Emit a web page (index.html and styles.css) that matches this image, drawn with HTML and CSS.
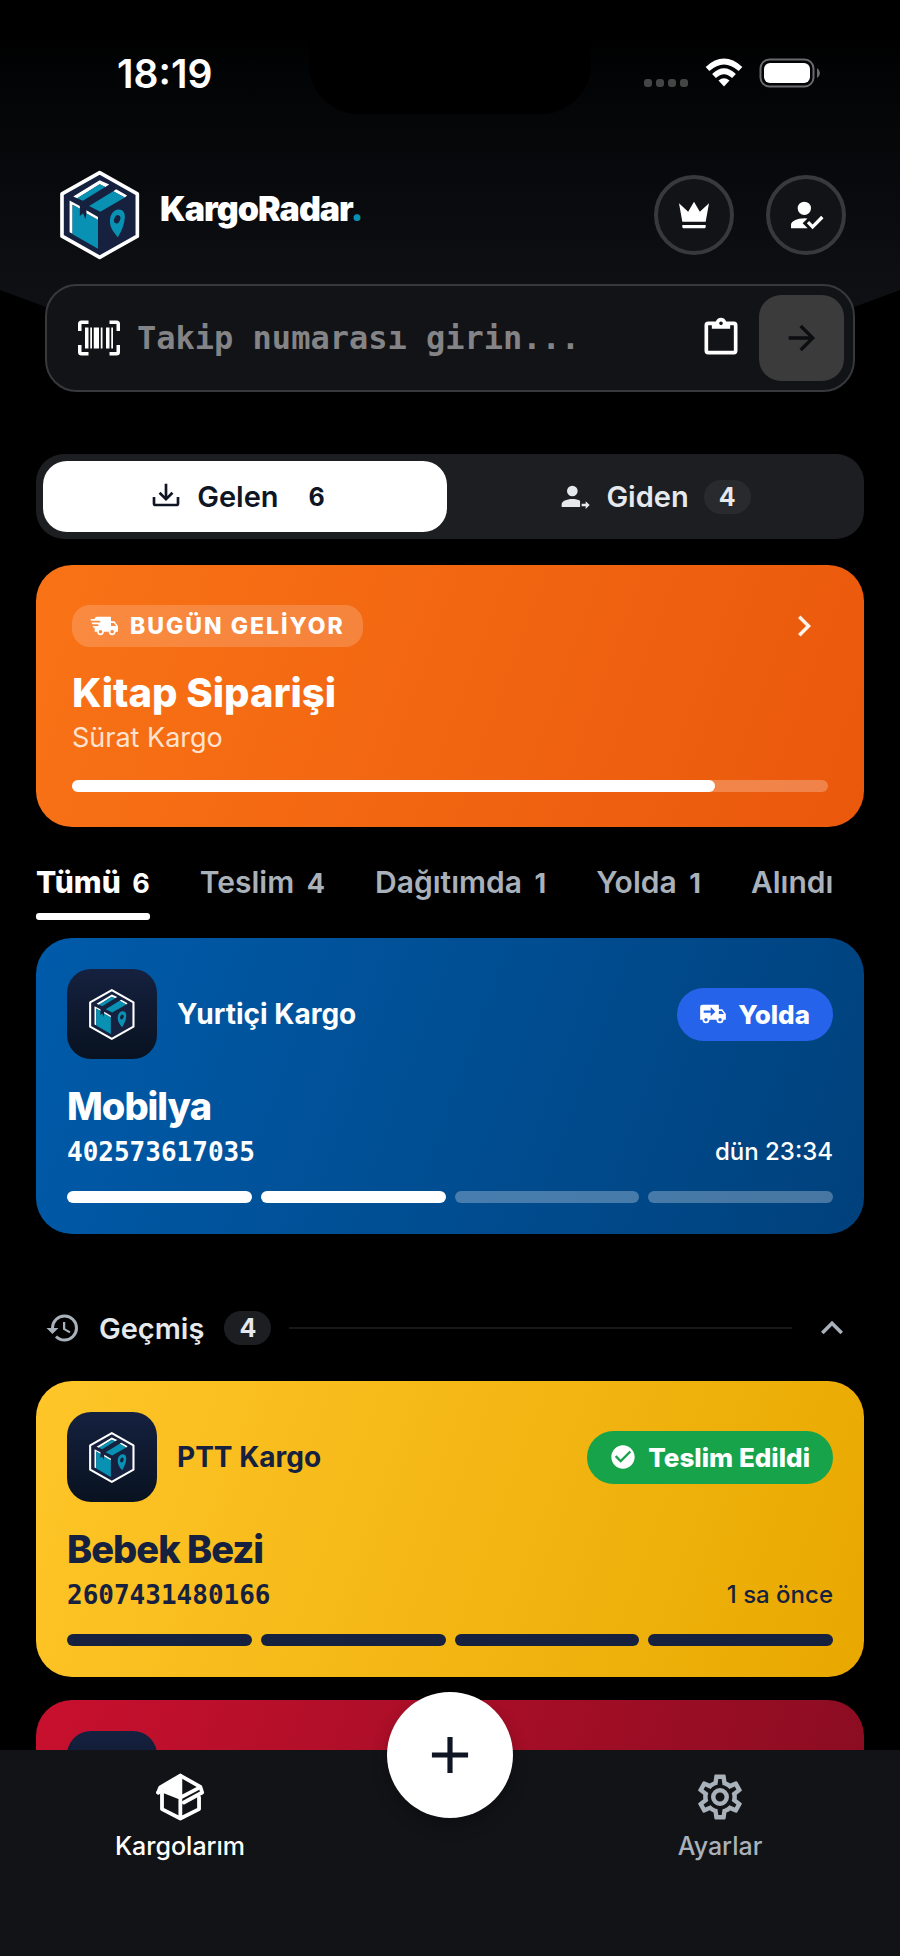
FILE: index.html
```html
<!DOCTYPE html>
<html lang="tr">
<head>
    <meta charset="UTF-8">
    <meta name="viewport" content="width=device-width, initial-scale=1.0">
    <title>KargoRadar</title>
    <link rel="stylesheet" href="styles.css">
</head>
<body>
    <!-- Shared icons -->
    <svg class="sprite" aria-hidden="true">
        <symbol id="logo" viewBox="61 57 242 276">
            <path d="M181 67L295 131V259L181 323L67 259V131Z" fill="#15213f" stroke="#fff" stroke-width="11" stroke-linejoin="round"/>
            <path d="M101 139L181 90L210 103L198 110L181 102L113 144Z" fill="#fff"/>
            <path d="M113 144L181 102L198 110L130 152Z" fill="#0891b2"/>
            <path d="M222 123L231 117L264 136L257 142Z" fill="#fff"/>
            <path d="M149 168L222 123L257 142L183 185Z" fill="#0891b2"/>
            <path d="M90 151L121 168V176L99 164V252L90 247Z" fill="#fff"/>
            <path d="M99 164L121 176V198L131 190L138 208L141 190L176 209V297L99 253Z" fill="#0891b2"/>
            <path d="M141 181L176 201V209L141 190Z" fill="#fff"/>
            <path d="M236 262C218 242 212 229 212 213C212 194 223 178 238 178C252 178 258 188 257 203C256 222 248 242 236 262Z" fill="#0891b2"/>
            <ellipse cx="234" cy="208" rx="9" ry="13" transform="rotate(20 234 208)" fill="#15213f"/>
        </symbol>
        <symbol id="crown" viewBox="0 0 24 24"><path d="M5 16L3 5L8.5 10L12 4L15.5 10L21 5L19 16H5M19 19C19 19.6 18.6 20 18 20H6C5.4 20 5 19.6 5 19V18H19V19Z"/></symbol>
        <symbol id="account-check" viewBox="0 0 24 24"><path d="M21.1 12.5L22.5 13.91L15.97 20.5L12.5 17L13.9 15.59L15.97 17.67L21.1 12.5M10 17L13 20H3V18C3 15.79 6.58 14 11 14L12.89 14.11L10 17M11 4A4 4 0 0 1 15 8A4 4 0 0 1 11 12A4 4 0 0 1 7 8A4 4 0 0 1 11 4Z"/></symbol>
        <symbol id="account-arrow" viewBox="0 0 24 24"><path d="M10 3.5A4 4 0 0 1 14 7.5A4 4 0 0 1 10 11.5A4 4 0 0 1 6 7.5A4 4 0 0 1 10 3.5M10 13.5C12.3 13.5 14.4 14 15.8 14.8V19.5H2V17.5C2 15.3 5.6 13.5 10 13.5M17 17H20V15.2L23 18L20 21V19H17Z"/></symbol>
        <symbol id="barcode" viewBox="0 0 24 24"><path d="M4 6H6V18H4V6M7 6H8V18H7V6M9 6H12V18H9V6M13 6H14V18H13V6M16 6H18V18H16V6M19 6H20V18H19V6M2 4V8H0V4A2 2 0 0 1 2 2H6V4H2M22 2A2 2 0 0 1 24 4V8H22V4H18V2H22M2 16V20H6V22H2A2 2 0 0 1 0 20V16H2M22 20V16H24V20A2 2 0 0 1 22 22H18V20H22Z"/></symbol>
        <symbol id="clipboard" viewBox="0 0 24 24"><path d="M19 3H14.82C14.4 1.84 13.3 1 12 1C10.7 1 9.6 1.84 9.18 3H5A2 2 0 0 0 3 5V19A2 2 0 0 0 5 21H19A2 2 0 0 0 21 19V5A2 2 0 0 0 19 3M12 3A1 1 0 0 1 13 4A1 1 0 0 1 12 5A1 1 0 0 1 11 4A1 1 0 0 1 12 3M7 7H17V5H19V19H5V5H7V7Z"/></symbol>
        <symbol id="arrow-right" viewBox="0 0 24 24"><path d="M4 11V13H16L10.5 18.5L11.92 19.92L19.84 12L11.92 4.08L10.5 5.5L16 11H4Z"/></symbol>
        <symbol id="tray-down" viewBox="0 0 24 24"><path d="M2 12H4V17H20V12H22V17C22 18.11 21.11 19 20 19H4C2.9 19 2 18.11 2 17V12M12 15L17.55 9.54L16.13 8.13L13 11.25V2H11V11.25L7.88 8.13L6.46 9.55L12 15Z"/></symbol>
        <symbol id="truck-fast" viewBox="0 0 24 24"><path d="M3 13.5L2.25 12H7.5L6.9 10.5H2L1.25 9H9.05L8.45 7.5H1.11L.25 6H4C4 4.9 4.9 4 6 4H18V8H21L24 12V17H22C22 18.66 20.66 20 19 20S16 18.66 16 17H12C12 18.66 10.66 20 9 20S6 18.66 6 17H4V13.5H3M19 18.5C19.83 18.5 20.5 17.83 20.5 17S19.83 15.5 19 15.5 17.5 16.17 17.5 17 18.17 18.5 19 18.5M20.5 9.5H18V12H22.46L20.5 9.5M9 18.5C9.83 18.5 10.5 17.83 10.5 17S9.83 15.5 9 15.5 7.5 16.17 7.5 17 8.17 18.5 9 18.5Z"/></symbol>
        <symbol id="truck" viewBox="0 0 24 24"><path fill-rule="evenodd" d="M3 4A2 2 0 0 0 1 6V17H3A3 3 0 0 0 9 17H15A3 3 0 0 0 21 17H23V12L20 8H17V4H3M10 6L14 10L10 14V11H4V9H10V6M17 9.5H19.5L21.47 12H17V9.5M6 15.5A1.5 1.5 0 0 1 6 18.5A1.5 1.5 0 0 1 6 15.5M18 15.5A1.5 1.5 0 0 1 18 18.5A1.5 1.5 0 0 1 18 15.5Z"/></symbol>
        <symbol id="check-circle" viewBox="0 0 24 24"><path d="M12 2C6.5 2 2 6.5 2 12S6.5 22 12 22 22 17.5 22 12 17.5 2 12 2M10 17L5 12L6.41 10.59L10 14.17L17.59 6.58L19 8L10 17Z"/></symbol>
        <symbol id="history" viewBox="0 0 24 24"><path d="M13.5 8H12V13L16.28 15.54L17 14.33L13.5 12.25V8M13 3A9 9 0 0 0 4 12H1L4.96 16.03L9 12H6A7 7 0 0 1 13 5A7 7 0 0 1 20 12A7 7 0 0 1 13 19C11.07 19 9.32 18.21 8.06 16.94L6.64 18.36C8.27 20 10.5 21 13 21A9 9 0 0 0 22 12A9 9 0 0 0 13 3"/></symbol>
        <symbol id="chevron-up" viewBox="0 0 24 24"><path d="M7.41 15.41L12 10.83L16.59 15.41L18 14L12 8L6 14L7.41 15.41Z"/></symbol>
        <symbol id="chevron-right" viewBox="0 0 24 24"><path d="M8.59 16.58L13.17 12L8.59 7.41L10 6L16 12L10 18L8.59 16.58Z"/></symbol>
        <symbol id="plus" viewBox="0 0 24 24"><path d="M19 13H13V19H11V13H5V11H11V5H13V11H19V13Z"/></symbol>
        <symbol id="cog" viewBox="0 0 24 24"><path d="M12 8A4 4 0 0 1 16 12A4 4 0 0 1 12 16A4 4 0 0 1 8 12A4 4 0 0 1 12 8M12 10A2 2 0 0 0 10 12A2 2 0 0 0 12 14A2 2 0 0 0 14 12A2 2 0 0 0 12 10M10 22C9.75 22 9.54 21.82 9.5 21.58L9.13 18.93C8.5 18.68 7.96 18.34 7.44 17.94L4.95 18.95C4.73 19.03 4.46 18.95 4.34 18.73L2.34 15.27C2.21 15.05 2.27 14.78 2.46 14.63L4.57 12.97L4.5 12L4.57 11L2.46 9.37C2.27 9.22 2.21 8.95 2.34 8.73L4.34 5.27C4.46 5.05 4.73 4.96 4.95 5.05L7.44 6.05C7.96 5.66 8.5 5.32 9.13 5.07L9.5 2.42C9.54 2.18 9.75 2 10 2H14C14.25 2 14.46 2.18 14.5 2.42L14.87 5.07C15.5 5.32 16.04 5.66 16.56 6.05L19.05 5.05C19.27 4.96 19.54 5.05 19.66 5.27L21.66 8.73C21.79 8.95 21.73 9.22 21.54 9.37L19.43 11L19.5 12L19.43 13L21.54 14.63C21.73 14.78 21.79 15.05 21.66 15.27L19.66 18.73C19.54 18.95 19.27 19.04 19.05 18.95L16.56 17.95C16.04 18.34 15.5 18.68 14.87 18.93L14.5 21.58C14.46 21.82 14.25 22 14 22H10M11.25 4L10.88 6.61C9.68 6.86 8.62 7.5 7.85 8.39L5.44 7.35L4.69 8.65L6.8 10.2C6.4 11.37 6.4 12.64 6.8 13.8L4.68 15.36L5.43 16.66L7.86 15.62C8.63 16.5 9.68 17.14 10.87 17.38L11.24 20H12.76L13.13 17.39C14.32 17.14 15.37 16.5 16.14 15.62L18.57 16.66L19.32 15.36L17.2 13.81C17.6 12.64 17.6 11.37 17.2 10.2L19.31 8.65L18.56 7.35L16.15 8.39C15.38 7.5 14.32 6.86 13.12 6.62L12.75 4H11.25Z"/></symbol>
        <symbol id="package" viewBox="161 63 156 156">
            <path d="M181 114L240 78V142Z"/>
            <g fill="none" stroke="currentColor" stroke-width="11" stroke-linejoin="round" stroke-linecap="round">
                <path d="M176 128L182 113L240 79L298 112L303 128L250 157"/>
                <path d="M176 128L187 122L240 143L291 116M187 124V176L240 203L294 176V142M240 79V203"/>
            </g>
        </symbol>
    </svg>

    <div class="app">
        <header class="hero">
            <div class="status-bar">
                <span class="time">18:19</span>
                <div class="notch"></div>
                <div class="status-icons">
                    <svg class="signal" viewBox="0 0 45 10"><rect y="1" width="8" height="8" rx="3"/><rect x="12" y="1" width="8" height="8" rx="3"/><rect x="24" y="1" width="8" height="8" rx="3"/><rect x="36" y="1" width="8" height="8" rx="3"/></svg>
                    <svg class="wifi" viewBox="0 0 38 30">
                        <g fill="none" stroke="#fff" stroke-width="5.500"><path d="M2.500 11Q19 -4 35.500 11"/><path d="M9 18Q19 8.500 29 18"/></g>
                        <path d="M13.500 22.500Q19 18 24.500 22.500L19 28.500Z"/>
                    </svg>
                    <svg class="battery" viewBox="0 0 62 30"><rect x="1.500" y="1.500" width="53" height="27" rx="9" fill="none" stroke="#6b6b6d" stroke-width="2"/><rect x="5" y="5" width="46" height="20" rx="6"/><path d="M58 10Q61 12 61 15T58 20Z" fill="#6b6b6d"/></svg>
                </div>
            </div>
            <div class="brand-row">
                <div class="brand">
                    <svg class="brand-logo"><use href="#logo"/></svg>
                    <h1>KargoRadar<span>.</span></h1>
                </div>
                <div class="actions">
                    <button class="round-btn" aria-label="Premium"><svg class="icon-lg"><use href="#crown"/></svg></button>
                    <button class="round-btn" aria-label="Hesap"><svg class="icon-lg"><use href="#account-check"/></svg></button>
                </div>
            </div>
            <form class="search">
                <svg class="scan"><use href="#barcode"/></svg>
                <input type="text" placeholder="Takip numarası girin..." aria-label="Takip numarası">
                <button type="button" class="paste" aria-label="Yapıştır"><svg class="icon-xl"><use href="#clipboard"/></svg></button>
                <button type="submit" class="submit" aria-label="Ara"><svg class="icon-lg"><use href="#arrow-right"/></svg></button>
            </form>
        </header>

        <main class="content">
            <div class="segment">
                <button class="active"><svg class="icon-md"><use href="#tray-down"/></svg>Gelen <span class="count">6</span></button>
                <button><svg class="icon-md"><use href="#account-arrow"/></svg>Giden <span class="count">4</span></button>
            </div>

            <section class="today">
                <div class="today-top">
                    <span class="today-tag"><svg class="icon-sm"><use href="#truck-fast"/></svg>BUGÜN GELİYOR</span>
                    <svg class="today-arrow"><use href="#chevron-right"/></svg>
                </div>
                <h2>Kitap Siparişi</h2>
                <p>Sürat Kargo</p>
                <div class="progress"><div style="width: 85%"></div></div>
            </section>

            <nav class="filters">
                <button class="active">Tümü <span>6</span></button>
                <button>Teslim <span>4</span></button>
                <button>Dağıtımda <span>1</span></button>
                <button>Yolda <span>1</span></button>
                <button>Alındı</button>
            </nav>

            <article class="card blue">
                <div class="card-top">
                    <div class="carrier-logo"><svg><use href="#logo"/></svg></div>
                    <span class="carrier">Yurtiçi Kargo</span>
                    <span class="status"><svg class="icon-sm"><use href="#truck"/></svg>Yolda</span>
                </div>
                <h3>Mobilya</h3>
                <div class="card-meta"><span class="number">402573617035</span><time>dün 23:34</time></div>
                <div class="steps"><i class="done"></i><i class="done"></i><i></i><i></i></div>
            </article>

            <div class="history">
                <svg class="history-icon"><use href="#history"/></svg>
                <h2>Geçmiş</h2>
                <span class="count">4</span>
                <hr>
                <button aria-label="Daralt"><svg class="icon-xl"><use href="#chevron-up"/></svg></button>
            </div>

            <article class="card yellow">
                <div class="card-top">
                    <div class="carrier-logo"><svg><use href="#logo"/></svg></div>
                    <span class="carrier">PTT Kargo</span>
                    <span class="status delivered"><svg class="icon-sm"><use href="#check-circle"/></svg>Teslim Edildi</span>
                </div>
                <h3>Bebek Bezi</h3>
                <div class="card-meta"><span class="number">2607431480166</span><time>1 sa önce</time></div>
                <div class="steps"><i class="done"></i><i class="done"></i><i class="done"></i><i class="done"></i></div>
            </article>

            <article class="card red">
                <div class="card-top">
                    <div class="carrier-logo"></div>
                </div>
            </article>
        </main>

        <footer class="tab-bar">
            <a class="active" href="#"><svg><use href="#package"/></svg>Kargolarım</a>
            <button class="fab" aria-label="Kargo ekle"><svg><use href="#plus"/></svg></button>
            <a href="#"><svg><use href="#cog"/></svg>Ayarlar</a>
        </footer>
    </div>
</body>
</html>
```

FILE: styles.css
```css
:root {
    --bg: #000000;
    --surface: #121317;
    --surface-2: #1d1e22;
    --border: #38393c;
    --text: #ffffff;
    --text-soft: #e5e9ee;
    --text-muted: #a9b1ba;
    --navy: #15213f;
    --accent: #0891b2;
}

* {
    margin: 0;
    padding: 0;
    box-sizing: border-box;
    font-family: Inter, 'Noto Sans', sans-serif;
}

body {
    background-color: var(--bg);
    color: var(--text);
}

button {
    border: none;
    background: none;
    color: inherit;
    cursor: pointer;
}

svg {
    fill: currentColor;
    flex: none;
}

.sprite {
    position: absolute;
    width: 0;
    height: 0;
}

.icon-sm {
    width: 28px;
    height: 28px;
}

.icon-md {
    width: 32px;
    height: 32px;
}

.icon-lg {
    width: 40px;
    height: 40px;
}

.icon-xl {
    width: 44px;
    height: 44px;
}

.app {
    display: flex;
    flex-direction: column;
    height: 100vh;
    overflow: hidden;
}

/* Header */
.hero {
    position: relative;
    padding: 0 45px;
    flex: none;
}

.hero::before {
    content: '';
    position: absolute;
    inset: 0;
    z-index: -1;
    background: linear-gradient(#000000 36px, #020304 64px, #0e1014 300px);
    clip-path: polygon(0 0, 100% 0, 100% 290px, 94% 310px, 6% 310px, 0 290px);
}

.status-bar {
    display: flex;
    justify-content: space-between;
    align-items: center;
    height: 146px;
    padding: 0 34px 0 72px;
}

.time {
    font-size: 39px;
    font-weight: 600;
}

.notch {
    position: absolute;
    top: 0;
    left: 50%;
    width: 282px;
    height: 114px;
    margin-left: -141px;
    background-color: #000000;
    border-radius: 0 0 50px 50px;
}

.status-icons {
    display: flex;
    align-items: flex-end;
    gap: 16px;
}

.signal {
    width: 45px;
    height: 10px;
    color: #454545;
}

.wifi {
    width: 38px;
    height: 30px;
}

.battery {
    width: 62px;
    height: 30px;
}

.brand-row {
    display: flex;
    justify-content: space-between;
    align-items: center;
    height: 138px;
    padding: 0 9px 0 15px;
}

.brand {
    display: flex;
    align-items: center;
    gap: 20px;
}

.brand-logo {
    width: 80px;
    height: 92px;
}

.brand h1 {
    font-size: 34px;
    font-weight: 900;
    line-height: 40px;
    letter-spacing: -1px;
    padding-bottom: 12px;
}

.brand h1 span {
    color: var(--accent);
}

.actions {
    display: flex;
    gap: 32px;
}

.round-btn {
    display: flex;
    align-items: center;
    justify-content: center;
    width: 80px;
    height: 80px;
    border: 4px solid var(--border);
    border-radius: 50%;
    background-color: var(--surface);
}

.search {
    display: flex;
    align-items: center;
    height: 108px;
    padding: 0 9px 0 31px;
    border: 2px solid var(--border);
    border-radius: 32px;
    background-color: var(--surface);
}

.scan {
    width: 42px;
    height: 42px;
}

.search input {
    flex: 1;
    min-width: 0;
    margin-left: 17px;
    border: none;
    outline: none;
    background: none;
    color: var(--text);
    font-family: 'DejaVu Sans Mono', monospace;
    font-size: 32px;
    font-weight: 700;
}

.search input::placeholder {
    color: #848486;
    opacity: 1;
}

.paste {
    display: flex;
    margin-right: 16px;
}

.submit {
    display: flex;
    align-items: center;
    justify-content: center;
    width: 85px;
    height: 86px;
    border-radius: 22px;
    background-color: #3b3b3b;
    color: #0c0d10;
}

/* Content */
.content {
    flex: 1;
    min-height: 0;
    padding: 62px 36px 0;
    overflow-y: auto;
    scrollbar-width: none;
}

.segment {
    display: flex;
    gap: 6px;
    height: 85px;
    padding: 7px;
    border-radius: 28px;
    background-color: var(--surface-2);
}

.segment button {
    display: flex;
    flex: 1;
    align-items: center;
    justify-content: center;
    gap: 15px;
    border-radius: 24px;
    color: var(--text-soft);
    font-size: 29px;
    font-weight: 600;
}

.segment .active {
    background-color: #ffffff;
    color: #0f1523;
}

.count {
    min-width: 46px;
    padding: 0 15px;
    border-radius: 17px;
    background-color: #292a2e;
    font-size: 25px;
    font-weight: 700;
    line-height: 34px;
    text-align: center;
}

.active .count {
    background: none;
}

.today {
    margin-top: 26px;
    padding: 40px 36px 35px;
    border-radius: 36px;
    background: linear-gradient(110deg, #f97316, #ea580c);
}

.today-top {
    display: flex;
    justify-content: space-between;
    align-items: center;
}

.today-tag {
    display: flex;
    align-items: center;
    gap: 12px;
    height: 42px;
    padding: 0 18px;
    border-radius: 18px;
    background-color: rgba(255, 255, 255, 0.18);
    font-size: 23px;
    font-weight: 800;
    letter-spacing: 2px;
}

.today-arrow {
    width: 48px;
    height: 42px;
    color: #fff3ea;
}

.today h2 {
    margin-top: 22px;
    font-size: 40px;
    font-weight: 800;
    line-height: 48px;
}

.today p {
    margin-top: 5px;
    color: #ffe3d0;
    font-size: 27px;
    line-height: 32px;
}

.progress {
    height: 12px;
    margin-top: 26px;
    border-radius: 6px;
    background-color: rgba(255, 255, 255, 0.25);
}

.progress div {
    height: 100%;
    border-radius: 6px;
    background-color: #ffffff;
}

.filters {
    display: flex;
    gap: 50px;
    margin: 37px 0 18px;
    overflow: hidden;
}

.filters button {
    flex: none;
    padding-bottom: 13px;
    border-bottom: 7px solid transparent;
    color: var(--text-muted);
    font-size: 30px;
    font-weight: 600;
    line-height: 36px;
}

.filters span {
    margin-left: 5px;
    font-size: 27px;
    font-weight: 700;
    line-height: 27px;
}

.filters .active {
    position: relative;
    color: var(--text);
    font-weight: 800;
}

.filters .active::after {
    content: '';
    position: absolute;
    left: 0;
    right: 0;
    bottom: -7px;
    height: 7px;
    border-radius: 3px;
    background-color: #ffffff;
}

/* Shipment cards */
.card {
    min-height: 296px;
    padding: 31px;
    border-radius: 36px;
}

.card + .card {
    margin-top: 23px;
}

.blue {
    background: linear-gradient(110deg, #005baa, #00417c);
}

.yellow {
    background: linear-gradient(110deg, #ffc629, #e8a800);
    color: var(--navy);
}

.red {
    background: linear-gradient(110deg, #c8102e, #850c20);
}

.card-top {
    display: flex;
    align-items: center;
}

.carrier-logo {
    display: flex;
    align-items: center;
    justify-content: center;
    width: 90px;
    height: 90px;
    border-radius: 24px;
    background: linear-gradient(#15213f, #081220);
}

.carrier-logo svg {
    width: 46px;
    height: 53px;
}

.carrier {
    flex: 1;
    margin-left: 20px;
    font-size: 28px;
    font-weight: 700;
}

.status {
    display: flex;
    align-items: center;
    gap: 11px;
    height: 53px;
    padding: 0 23px 0 22px;
    border-radius: 27px;
    background-color: #2563eb;
    color: #ffffff;
    font-size: 26px;
    font-weight: 800;
}

.delivered {
    background-color: #16a34a;
}

.card h3 {
    margin-top: 25px;
    font-size: 38px;
    font-weight: 800;
    line-height: 44px;
    letter-spacing: -1px;
}

.card-meta {
    display: flex;
    justify-content: space-between;
    margin-top: 9px;
    line-height: 30px;
}

.number {
    font-family: 'DejaVu Sans Mono', monospace;
    font-size: 26px;
    font-weight: 700;
}

.card-meta time {
    font-size: 24px;
    font-weight: 500;
}

.steps {
    display: flex;
    gap: 9px;
    margin-top: 24px;
}

.steps i {
    flex: 1;
    height: 12px;
    border-radius: 6px;
    background-color: rgba(255, 255, 255, 0.28);
}

.steps .done {
    background-color: #ffffff;
}

.yellow .steps .done {
    background-color: var(--navy);
}

/* History heading */
.history {
    display: flex;
    align-items: center;
    height: 36px;
    margin: 76px 10px 35px 9px;
    color: var(--text-soft);
}

.history-icon {
    width: 36px;
    height: 36px;
    color: var(--text-muted);
}

.history h2 {
    margin: 0 20px 0 18px;
    font-size: 29px;
    font-weight: 600;
}

.history .count {
    background-color: var(--surface-2);
}

.history hr {
    flex: 1;
    margin: 0 18px;
    border: none;
    border-top: 2px solid #17181c;
}

.history button {
    display: flex;
    color: var(--text-muted);
}

/* Bottom tab bar */
.tab-bar {
    position: relative;
    display: flex;
    justify-content: space-between;
    flex: none;
    height: 206px;
    background-color: var(--surface);
}

.tab-bar a {
    display: flex;
    flex-direction: column;
    align-items: center;
    width: 40%;
    padding-top: 20px;
    color: var(--text-muted);
    font-size: 25px;
    font-weight: 500;
    line-height: 30px;
    text-decoration: none;
}

.tab-bar a svg {
    width: 54px;
    height: 54px;
    margin-bottom: 7px;
}

.tab-bar .active {
    color: var(--text);
}

.fab {
    position: absolute;
    top: -58px;
    left: 50%;
    display: flex;
    align-items: center;
    justify-content: center;
    width: 126px;
    height: 126px;
    margin-left: -63px;
    border-radius: 50%;
    background-color: #ffffff;
    color: #0f1523;
    box-shadow: 0 8px 16px rgba(0, 0, 0, 0.25);
}

.fab svg {
    width: 62px;
    height: 62px;
}
```
